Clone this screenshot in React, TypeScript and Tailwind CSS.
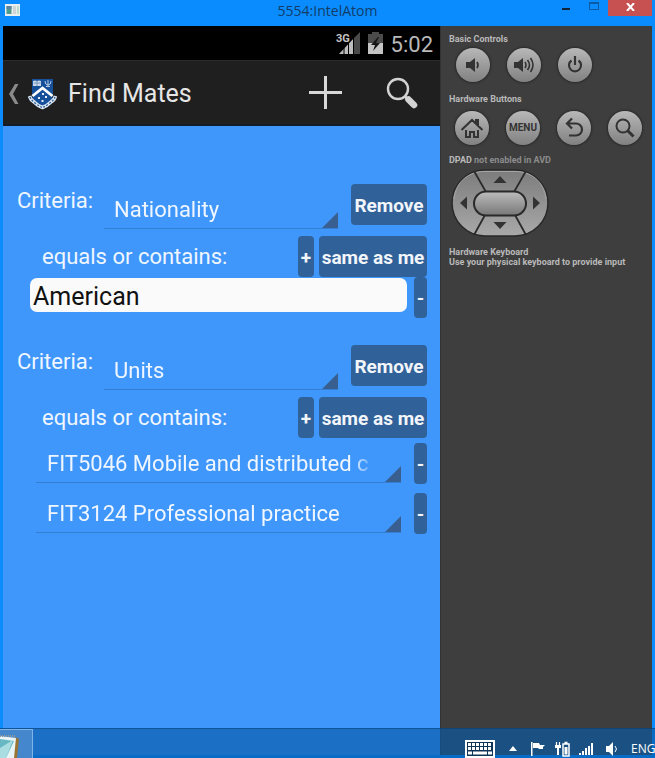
import type { ReactNode } from "react";

function Spinner({ label, value, offset }: { label: string; value: string; offset?: boolean }) {
  return (
    <div className="relative min-w-0 flex-1 border-b border-[#347fd2]">
      <select
        aria-label={label}
        defaultValue={value}
        className={`block w-full appearance-none bg-transparent pr-[30px] text-[22px] text-[#f0f6ff] outline-none [mask-image:linear-gradient(to_right,black_calc(100%-48px),transparent_calc(100%-26px))] ${offset ? "h-11 pt-[6px] pl-[10px]" : "h-[39px] pt-[2px] pl-[11px]"}`}
      >
        <option>{value}</option>
      </select>
      <svg className="pointer-events-none absolute right-0 bottom-0" width="16" height="16" viewBox="0 0 16 16" aria-hidden="true">
        <path d="M16 0v16H0z" fill="#385f8f" />
      </svg>
    </div>
  );
}

function DarkButton({ children, width, label }: { children: ReactNode; width: string; label?: string }) {
  return (
    <button
      type="button"
      aria-label={label}
      className={`flex h-[41px] shrink-0 items-center justify-center rounded-[4px] bg-[#306299] pt-[3px] text-[19px] font-bold whitespace-nowrap text-[#f2f5fa] ${width}`}
    >
      {children}
    </button>
  );
}

function Criterion({ field, children }: { field: string; children: ReactNode }) {
  return (
    <section>
      <div className="flex items-start">
        <span className="w-[87px] shrink-0 text-[22px] leading-[33px]">Criteria:</span>
        <Spinner label="Criteria" value={field} offset />
        <div className="ml-[13px]">
          <DarkButton width="w-[76px]">Remove</DarkButton>
        </div>
      </div>
      <div className="mt-[7px] flex items-center">
        <span className="flex-1 pl-[25px] text-[22px]">equals or contains:</span>
        <DarkButton width="w-4" label="Add value">+</DarkButton>
        <div className="ml-[5px]">
          <DarkButton width="w-[108px]">same as me</DarkButton>
        </div>
      </div>
      {children}
    </section>
  );
}

function RoundButton({ label, children }: { label: string; children: ReactNode }) {
  return (
    <button
      type="button"
      aria-label={label}
      className="flex size-[34px] items-center justify-center rounded-full bg-linear-to-b from-[#b8b8b8] to-[#818181] text-[#333] shadow-[0_0_2px_1px_#2a2a2a]"
    >
      {children}
    </button>
  );
}

function Dpad() {
  return (
    <svg className="mt-1 ml-[2px] block" width="98" height="68" viewBox="0 0 98 68" role="img" aria-label="Directional pad">
      <defs>
        <linearGradient id="pad" x1="0" y1="0" x2="0" y2="1">
          <stop offset="0" stopColor="#7c7c7c" />
          <stop offset="1" stopColor="#a9a9a9" />
        </linearGradient>
        <linearGradient id="center" x1="0" y1="0" x2="0" y2="1">
          <stop offset="0" stopColor="#bdbdbd" />
          <stop offset="1" stopColor="#777" />
        </linearGradient>
      </defs>
      <rect x="1" y="1" width="96" height="66" rx="33" fill="url(#pad)" stroke="#292929" strokeWidth="1.5" />
      <path d="M3 30C5 12 18 2.500 34 2.500h30C80 2.500 93 12 95 30" fill="none" stroke="#a6a6a6" strokeWidth="1" />
      <path d="M23 2l12 21M75 2L63 23M23 66l11-20M75 66L64 46" stroke="#2b2b2b" strokeWidth="1.8" />
      <rect x="23" y="22.500" width="52" height="24" rx="12" fill="url(#center)" stroke="#292929" strokeWidth="2" />
      <path d="M49 7l6.500 7h-13zM49 60l6.500-7h-13zM9 34l7-6.500v13zM89 34l-7-6.500v13z" fill="#333" />
    </svg>
  );
}

function SidePanel() {
  return (
    <aside className="w-[212px] shrink-0 border-l border-[#333] bg-[#3e3e3e] pt-2 pl-2 text-[9px] leading-[10px] font-bold text-[#b9b9b9]">
      <h2>Basic Controls</h2>
      <div className="mt-1 ml-[7px] flex gap-[17px]">
        <RoundButton label="Volume down">
          <svg width="18" height="18" viewBox="0 0 18 18" fill="none" stroke="currentColor">
            <path d="M2 6h4l5-4v14l-5-4H2z" fill="currentColor" stroke="none" />
            <path d="M13 6q2 3 0 6" strokeWidth="1.800" />
          </svg>
        </RoundButton>
        <RoundButton label="Volume up">
          <svg width="24" height="18" viewBox="0 0 24 18" fill="none" stroke="currentColor">
            <path d="M2 6h4l5-4v14l-5-4H2z" fill="currentColor" stroke="none" />
            <path d="M13 6q2 3 0 6M15.500 4q4 5 0 10M18.500 2q5 7 0 14" strokeWidth="1.600" />
          </svg>
        </RoundButton>
        <RoundButton label="Power">
          <svg width="18" height="20" viewBox="0 0 18 20" fill="none" stroke="currentColor" strokeWidth="2.200">
            <path d="M5.500 5.500a6 6 0 1 0 7 0M9 1v9" />
          </svg>
        </RoundButton>
      </div>
      <h2 className="mt-3">Hardware Buttons</h2>
      <div className="mt-[7px] ml-[6px] flex gap-[17px]">
        <RoundButton label="Home">
          <svg width="24" height="22" viewBox="0 0 24 22" fill="none" stroke="currentColor" strokeWidth="2">
            <path d="M1.500 13L12 3l10.500 10M16 6V3h2v6M6 13v7h4v-5h4v5h4v-7" />
          </svg>
        </RoundButton>
        <RoundButton label="Menu">
          <span className="text-[10px] leading-[10px]">MENU</span>
        </RoundButton>
        <RoundButton label="Back">
          <svg width="20" height="22" viewBox="0 0 20 22" fill="none" stroke="currentColor" strokeWidth="2.200">
            <path d="M8 1.500L3 6.500l5 5M3 6.500h9a6 6 0 0 1 0 12H5" />
          </svg>
        </RoundButton>
        <RoundButton label="Search">
          <svg width="22" height="22" viewBox="0 0 22 22" fill="none" stroke="currentColor">
            <circle cx="9" cy="9" r="6.500" strokeWidth="2" />
            <path d="M13.500 13.500l6 6" strokeWidth="3" />
          </svg>
        </RoundButton>
      </div>
      <p className="mt-[10px]">
        DPAD <span className="text-[#8c8c8c]">not enabled in AVD</span>
      </p>
      <Dpad />
      <h2 className="mt-[10px]">Hardware Keyboard</h2>
      <p>Use your physical keyboard to provide input</p>
    </aside>
  );
}

function StatusBar() {
  return (
    <div className="flex h-[34px] items-center justify-end bg-black pr-[7px] text-[#b9b9b9]">
      <svg width="24" height="24" viewBox="0 0 24 24" aria-label="3G signal" role="img">
        <path d="M24 1v22h-6V7z" fill="#4a4a4a" />
        <path d="M18 7v16H3z" fill="#bdbdbd" />
        <path d="M8 16v7M12.500 12v11M17.500 7v16" stroke="#000" strokeWidth="1" />
        <text x="0" y="11" fontSize="11" fontWeight="700" fontFamily="Roboto, sans-serif" fill="#c5c5c5" stroke="#000" strokeWidth="2" paintOrder="stroke">3G</text>
      </svg>
      <svg className="ml-[8px]" width="15" height="22" viewBox="0 0 15 22" aria-label="Battery charging" role="img">
        <path d="M4 0h7v2h4v20H0V2h4z" fill="#4b4b4b" />
        <path d="M0 11h15v11H0z" fill="#c4c4c4" />
        <path d="M10 5L3 13h4l-2 6 7-8H8l3-6z" fill="#161616" />
      </svg>
      <span className="ml-[8px] pt-[2px] text-[22px]">5:02</span>
    </div>
  );
}

function ActionBar() {
  return (
    <header className="flex h-[66px] items-center border-t border-b-2 border-t-[#2c2c2c] border-b-[#131c28] bg-[#1f1f1f] text-[#e6e6e6]">
      <button type="button" aria-label="Navigate up" className="ml-[5px] flex items-center gap-[9px] pt-[3px]">
        <svg width="11" height="20" viewBox="0 0 11 20" fill="#8a8a8a">
          <path d="M7 0h3.500L5 10l5.500 10H7L1 10z" />
        </svg>
        <svg width="30" height="32" viewBox="0 0 30 32" aria-hidden="true">
          <path d="M4 1h21v15q0 8-10.500 13Q4 24 4 16z" fill="#17509a" />
          <path d="M5 3q2-1 4 0 2-1 4 0v5H5z" fill="#c9d8ea" />
          <path d="M9 3v5M5.500 5h7" stroke="#5780ae" strokeWidth=".7" />
          <path d="M17 3q0 4 3 4t3-4M20 2v7M18 8.500h4" fill="none" stroke="#b6cae3" strokeWidth="1" />
          <path d="M4.500 18l10-8 10 8" fill="none" stroke="#fff" strokeWidth="2.800" />
          <path d="M14 15h2v2h-2zM10 19h2v2h-2zM17 18h2v2h-2zM13.500 22h2v2h-2z" fill="#e5eefa" />
          <path d="M1.500 18q1 4 4.500 6 4 4 8.500 5.500 4.500-1.500 8.500-5.500 3.500-2 4.500-6" fill="none" stroke="#dbe7f3" strokeWidth="3.500" />
          <path d="M2 19q1 3 4.500 5.500 4 3.500 8 5 4-1.500 8-5 3.500-2.500 4.500-5.500" fill="none" stroke="#315f96" strokeWidth="1.300" strokeDasharray="2 1.500" />
        </svg>
      </button>
      <h1 className="ml-[10px] flex-1 pt-[3px] text-[25px]">Find Mates</h1>
      <button type="button" aria-label="Add criteria">
        <svg className="block" width="33" height="33" viewBox="0 0 33 33" stroke="#d8d8d8" strokeWidth="3">
          <path d="M16.500 0v33M0 16.500h33" />
        </svg>
      </button>
      <button type="button" aria-label="Search" className="mr-[22px] ml-[44px]">
        <svg className="block" width="32" height="32" viewBox="0 0 32 32" fill="none" stroke="#d3d3d3">
          <circle cx="12" cy="12" r="10" strokeWidth="2.400" />
          <path d="M18.500 19l4 4" strokeWidth="3" />
          <path d="M22.500 22.500l5.500 5.500" strokeWidth="6.500" strokeLinecap="round" />
        </svg>
      </button>
    </header>
  );
}

function Taskbar() {
  return (
    <footer className="absolute inset-x-0 bottom-0 flex h-[30px] items-center border-t border-[#06376b]/50 bg-[#075ba8]/65 text-white">
      <button type="button" aria-label="Notepad" className="h-full w-[33px] overflow-hidden border-t border-r border-[#7fb4ea] bg-[#4487cc]">
        <svg className="block" width="32" height="28" viewBox="0 0 32 28">
          <path d="M15 7l4 2-2 19h-5z" fill="#9a7432" />
          <path d="M0 6l16 2-2 20H0z" fill="#e9f4f6" />
          <path d="M0 9l14 2-8 17H0z" fill="#68b8c4" />
          <path d="M0 18L13 10 6 28H0z" fill="#a9dde2" />
          <path d="M0 6h15" stroke="#8c989b" strokeWidth="2" strokeDasharray="1 1" />
        </svg>
      </button>
      <div className="ml-auto flex items-center pt-[10px]">
        <svg width="30" height="18" viewBox="0 0 30 18" role="img" aria-label="Touch keyboard">
          <path d="M0 0h30v18H0z" fill="#fff" />
          <path d="M2 2h26v14H2z" fill="#103456" />
          <path d="M3 4.500h24M3 8.500h24" stroke="#fff" strokeWidth="3" strokeDasharray="3 1" />
          <path d="M3 13h4M8 13h14M23 13h4" stroke="#fff" strokeWidth="3" />
        </svg>
        <svg className="ml-[14px]" width="8" height="5" viewBox="0 0 8 5" fill="#fff"><path d="M4 0l4 5H0z" /></svg>
        <svg className="ml-[13px]" width="16" height="15" viewBox="0 0 16 15" fill="#fff">
          <path d="M1 1h1.500v14H1zM3 2h6l1 2h5l-2 2 0 2H9L8 7H3z" />
        </svg>
        <svg className="ml-[9px]" width="15" height="16" viewBox="0 0 15 16" fill="none" stroke="#fff">
          <path d="M8 3h6v12H8zM9.500 1.500h3" strokeWidth="1.500" />
          <path d="M9.500 6h3v7.500h-3z" fill="#fff" stroke="none" />
          <path d="M1.500 1v4M4.500 1v4" strokeWidth="1.200" />
          <path d="M0 4h6v3H4v7H2V7H0z" fill="#fff" stroke="none" />
        </svg>
        <svg className="ml-[9px]" width="15" height="12" viewBox="0 0 15 12" fill="#fff">
          <path d="M0 10h2v2H0zM3 8h2v4H3zM6 5h2v7H6zM9 3h2v9H9zM12 0h2v12h-2z" />
        </svg>
        <svg className="ml-[12px]" width="13" height="14" viewBox="0 0 13 14" fill="#fff">
          <path d="M0 4h3l4-4v14l-4-4H0z" />
          <path d="M9 4q3 3 0 6" fill="none" stroke="#fff" />
        </svg>
        <span className="ml-3 w-6 font-['Open_Sans',sans-serif] text-[12px] leading-4">ENG</span>
      </div>
    </footer>
  );
}

export default function App() {
  return (
    <div className="relative flex min-h-screen flex-col overflow-hidden bg-[#0a8cff] px-[3px] pb-[3px] font-[Roboto,'Liberation_Sans',sans-serif]">
      <div className="grid h-[26px] grid-cols-[1fr_auto_1fr] items-start">
        <svg className="mt-1 ml-[2px]" width="15" height="12" viewBox="0 0 15 12" aria-hidden="true">
          <path d="M0 0h15v12H0z" fill="#e9eeee" />
          <path d="M1.500 2h5v8h-5z" fill="#4c9b8e" />
          <path d="M1.500 2h5v3h-5z" fill="#5b82a4" />
          <path d="M8 2h3v8H8z" fill="#cfd4d6" />
          <path d="M12 2h2v8h-2z" fill="#b9dccb" />
        </svg>
        <span className="font-['Open_Sans',sans-serif] text-[14px] leading-[22px] text-[#123c66]">5554:IntelAtom</span>
        <div className="flex justify-end">
          <button type="button" aria-label="Minimize" className="flex h-4 w-[26px] items-start justify-center pt-2">
            <span className="h-[2px] w-2 bg-[#10253a]" />
          </button>
          <button type="button" aria-label="Maximize" className="flex h-4 w-[29px] items-start justify-center pt-[2px]">
            <span className="h-2 w-[10px] border border-t-2 border-[#0c5ba5]" />
          </button>
          <button type="button" aria-label="Close" className="flex h-4 w-[44px] items-center justify-center bg-[#c75050] pb-[3px]">
            <svg width="9" height="8" viewBox="0 0 9 8" stroke="#fff" strokeWidth="2"><path d="M1 0l7 8M8 0L1 8" /></svg>
          </button>
        </div>
      </div>
      <div className="flex flex-1">
        <div className="flex min-w-0 flex-1 flex-col bg-[#3f97fb]">
          <StatusBar />
          <ActionBar />
          <main className="flex flex-col gap-[27px] pt-[58px] pr-[13px] pl-[14px] text-[#f0f6ff]">
            <Criterion field="Nationality">
              <div className="flex items-start pl-[13px]">
                <input
                  aria-label="Nationality value"
                  defaultValue="American"
                  className="mt-px mr-[7px] h-[34px] min-w-0 flex-1 rounded-[7px] bg-[#fafafa] px-[3px] pt-[3px] text-[25px] text-[#111] outline-none"
                />
                <DarkButton width="w-[13px]" label="Remove value">-</DarkButton>
              </div>
            </Criterion>
            <Criterion field="Units">
              <div className="mt-[5px] flex flex-col gap-[9px] pl-[19px]">
                {["FIT5046 Mobile and distributed c", "FIT3124 Professional practice"].map((unit) => (
                  <div key={unit} className="flex items-start gap-[13px]">
                    <Spinner label="Unit" value={unit} />
                    <DarkButton width="w-[13px]" label="Remove unit">-</DarkButton>
                  </div>
                ))}
              </div>
            </Criterion>
          </main>
        </div>
        <SidePanel />
      </div>
      <Taskbar />
    </div>
  );
}
